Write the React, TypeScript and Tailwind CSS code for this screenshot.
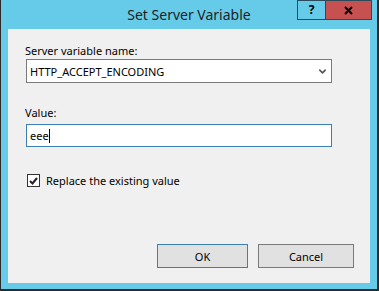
import { ChevronDown } from "lucide-react";

export default function App() {
  return (
    <div className="w-[379px] h-[291px] bg-[#2b2b2b] pl-px pr-[2px] pb-[2px] font-['Noto_Sans',sans-serif] text-[#000]">
      <div className="w-full h-full bg-[#65cbe9] flex flex-col px-[7px] pb-[6px]">
        {/* title bar */}
        <div className="h-[29px] -mx-[7px] grid grid-cols-[1fr_auto_1fr]">
          <div />
          <div className="pt-[5px] text-[14px] leading-[19px] text-[#1e1e1e]">Set Server Variable</div>
          <div className="flex justify-end items-start pr-[5px]">
            <div className="w-[28px] h-[20px] border border-[#2b4a5a] border-r-0 flex items-center justify-center text-[12px] font-bold leading-none">
              ?
            </div>
            <div className="w-[47px] h-[20px] bg-[#c75050] border border-[#2b4a5a] flex items-center justify-center">
              <svg width="9" height="9" viewBox="0 0 9 9">
                <path d="M1 1L8 8M8 1L1 8" stroke="#000" strokeWidth="2" />
              </svg>
            </div>
          </div>
        </div>

        {/* body */}
        <div className="flex-1 bg-[#f0f0f0] flex flex-col pl-[17px] pr-[16px] pt-[14px] text-[11px] leading-[15px]">
          <label className="block">Server variable name:</label>
          <div className="mt-[1px] ml-px w-[306px] h-[24px] bg-white border border-[#7a7a7a] flex items-center justify-between pl-[3px] pr-[3px]">
            <span>HTTP_ACCEPT_ENCODING</span>
            <ChevronDown className="w-[11px] h-[11px] text-[#555]" strokeWidth={3.5} />
          </div>

          <label className="block mt-[22px]">Value:</label>
          <div className="mt-[4px] ml-px w-[306px] h-[23px] bg-white border border-[#3c7fb1] flex items-center pl-[3px]">
            <span>eee</span>
            <span className="w-px h-[14px] bg-black" />
          </div>

          <div className="mt-[26px] ml-[2px] flex items-center gap-[6px]">
            <div className="w-[13px] h-[13px] bg-white border border-[#333] flex items-center justify-center">
              <svg width="9" height="8" viewBox="0 0 9 8">
                <path d="M1 4L3.5 6.5L8 1" stroke="#222" strokeWidth="2" fill="none" />
              </svg>
            </div>
            <span>Replace the existing value</span>
          </div>

          <div className="flex-1" />
          <div className="flex justify-end gap-[10px] pb-[15px]">
            <button className="w-[91px] h-[24px] bg-[#e1e1e1] border border-[#3c7fb1] text-[11px]">OK</button>
            <button className="w-[96px] h-[24px] bg-[#e1e1e1] border border-[#7a7a7a] text-[11px]">Cancel</button>
          </div>
        </div>
      </div>
    </div>
  );
}
